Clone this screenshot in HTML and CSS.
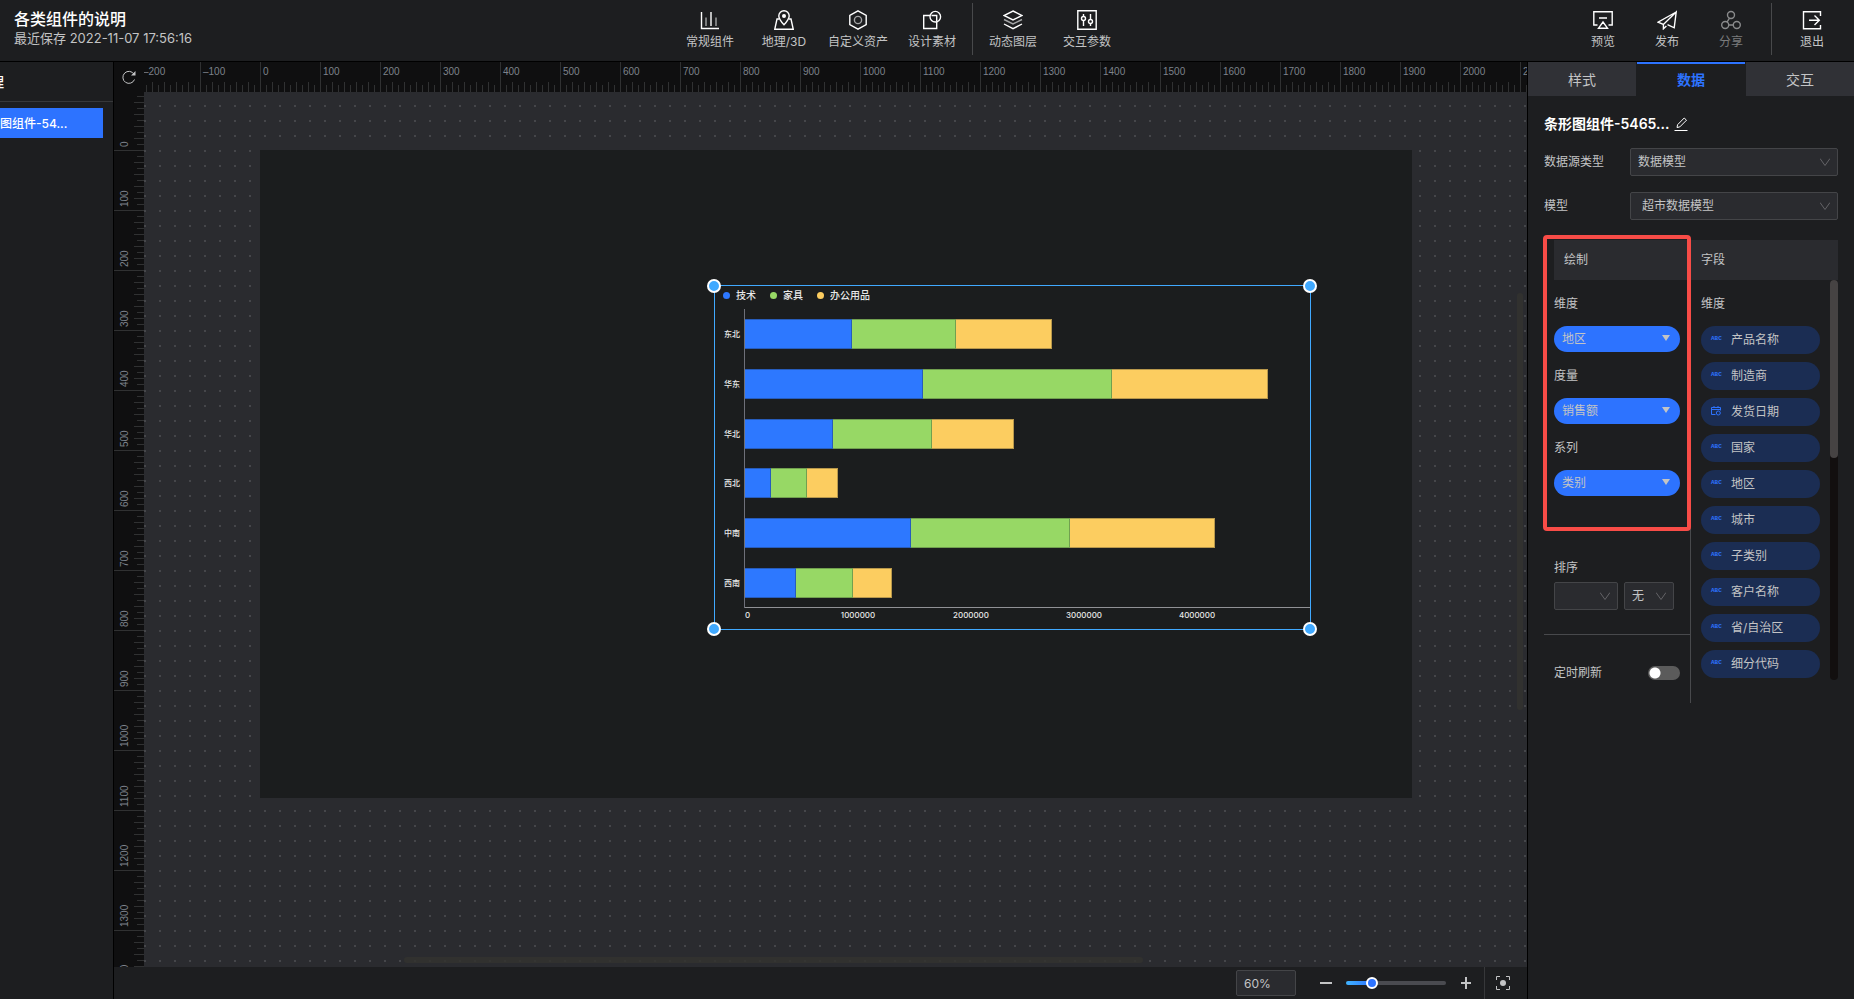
FILE: index.html
```html
<!DOCTYPE html>
<html lang="zh-CN">
<head>
    <meta charset="UTF-8">
    <meta name="viewport" content="width=device-width, initial-scale=1.0">
    <title>各类组件的说明</title>
    <link rel="stylesheet" href="styles.css">
</head>
<body>
    <header class="topbar">
        <div class="project">
            <h1>各类组件的说明</h1>
            <p>最近保存 2022-11-07 17:56:16</p>
        </div>
        <nav class="tools">
            <button class="tool">
                <svg viewBox="0 0 20 20"><path d="M1.5 2v16.5H19M11 2v14"/><path class="dim" d="M6 7.5V16M16 7.5V16"/></svg>
                常规组件
            </button>
            <button class="tool">
                <svg viewBox="0 0 20 20"><path d="M5 9H3L.8 19.2h18.4L17 9h-2"/><path d="M10 14.8C6.5 11 4.8 8.8 4.8 6a5.2 5.2 0 0 1 10.4 0c0 2.8-1.7 5-5.2 8.8z"/><circle class="solid" cx="10" cy="6" r="2"/></svg>
                地理/3D
            </button>
            <button class="tool">
                <svg viewBox="0 0 20 20"><path d="M10 .9l8.2 4.5v9.2L10 19.1l-8.2-4.5V5.4z"/><circle class="dim" cx="10" cy="10" r="3.6"/></svg>
                自定义资产
            </button>
            <button class="tool">
                <svg viewBox="0 0 20 20"><path d="M8 5.5H1.7v13h13V12"/><circle cx="13.3" cy="6.7" r="5.3"/><path d="M9.5 5.5h5.2V11"/></svg>
                设计素材
            </button>
            <span class="divider"></span>
            <button class="tool">
                <svg viewBox="0 0 20 20"><path d="M10 1l9 4.5-9 4.5-9-4.5z"/><path class="dim" d="M1 9.5l9 4.5 9-4.5"/><path d="M1 14l9 4.7 9-4.7"/></svg>
                动态图层
            </button>
            <button class="tool">
                <svg viewBox="0 0 20 20"><path d="M.8.8h18.4v18.4H.8z"/><path d="M6.5 4v2.5M6.5 10.5V16M13.5 4v5.5M13.5 13.5V16"/><circle cx="6.5" cy="8.5" r="2"/><circle cx="13.5" cy="11.5" r="2"/></svg>
                交互参数
            </button>
        </nav>
        <div class="actions">
            <button class="tool">
                <svg viewBox="0 0 20 20"><path d="M4.5 15H.8V1.8h18.4V15h-3.7M6 8h8M10 12l4.5 6.2h-9z"/></svg>
                预览
            </button>
            <button class="tool">
                <svg viewBox="0 0 20 20"><path d="M19.2 2L1 12.2l5.4 2.3L19.2 2l-2 15.8-6.7-3.2"/><path d="M6.4 14.5v4.3l3-2.8"/></svg>
                发布
            </button>
            <button class="tool" disabled>
                <svg viewBox="0 0 20 20"><circle cx="10" cy="5" r="3.5"/><circle cx="4.2" cy="15" r="3.5"/><circle cx="15.8" cy="15" r="3.5"/><path d="M8.5 8.2l-2.5 4M7.7 15h4.6"/></svg>
                分享
            </button>
            <span class="divider"></span>
            <button class="tool">
                <svg viewBox="0 0 20 20"><path d="M18.5 6V1.7h-17v17h17V15M7 10.2h10M12.5 5.5l4.8 4.7-4.8 4.7"/></svg>
                退出
            </button>
        </div>
    </header>

    <div class="workspace">
        <aside class="layers">
            <h2><span>理</span></h2>
            <a class="layer" href="#">图组件-54...</a>
        </aside>

        <main class="editor">
            <div class="corner">
                <button class="icon-btn" aria-label="重置">
                    <svg viewBox="0 0 14 14"><path d="M12 4.2A6 6 0 1 0 12.5 9.5"/><path class="solid" d="M13.5 1v4.6H9z"/></svg>
                </button>
            </div>
            <div class="ruler ruler-x">
                <span>–200</span><span>–100</span><span>0</span><span>100</span><span>200</span><span>300</span><span>400</span><span>500</span><span>600</span><span>700</span><span>800</span><span>900</span><span>1000</span><span>1100</span><span>1200</span><span>1300</span><span>1400</span><span>1500</span><span>1600</span><span>1700</span><span>1800</span><span>1900</span><span>2000</span><span>2100</span>
            </div>
            <div class="ruler ruler-y">
                <span>0</span><span>100</span><span>200</span><span>300</span><span>400</span><span>500</span><span>600</span><span>700</span><span>800</span><span>900</span><span>1000</span><span>1100</span><span>1200</span><span>1300</span><span>1400</span>
            </div>
            <div class="canvas">
                <div class="stage">
                    <!-- selected component -->
                    <section class="chart">
                        <i class="handle nw"></i><i class="handle ne"></i><i class="handle sw"></i><i class="handle se"></i>
                        <ul class="legend">
                            <li class="tech">技术</li>
                            <li class="furniture">家具</li>
                            <li class="office">办公用品</li>
                        </ul>
                        <div class="plot">
                            <div class="row"><span>东北</span><div class="bar"><i class="tech" style="width:18.9%"></i><i class="furniture" style="width:18.5%"></i><i class="office" style="width:16.9%"></i></div></div>
                            <div class="row"><span>华东</span><div class="bar"><i class="tech" style="width:31.5%"></i><i class="furniture" style="width:33.4%"></i><i class="office" style="width:27.7%"></i></div></div>
                            <div class="row"><span>华北</span><div class="bar"><i class="tech" style="width:15.5%"></i><i class="furniture" style="width:17.6%"></i><i class="office" style="width:14.5%"></i></div></div>
                            <div class="row"><span>西北</span><div class="bar"><i class="tech" style="width:4.6%"></i><i class="furniture" style="width:6.4%"></i><i class="office" style="width:5.4%"></i></div></div>
                            <div class="row"><span>中南</span><div class="bar"><i class="tech" style="width:29.4%"></i><i class="furniture" style="width:28.2%"></i><i class="office" style="width:25.5%"></i></div></div>
                            <div class="row"><span>西南</span><div class="bar"><i class="tech" style="width:9.1%"></i><i class="furniture" style="width:10%"></i><i class="office" style="width:7%"></i></div></div>
                        </div>
                        <div class="axis"><span>0</span><span>1000000</span><span>2000000</span><span>3000000</span><span>4000000</span></div>
                    </section>
                </div>
                <i class="scroll scroll-x"></i>
                <i class="scroll scroll-y"></i>
            </div>
            <footer class="zoombar">
                <input class="zoom-value" type="text" value="60%" aria-label="缩放比例">
                <button class="icon-btn" aria-label="缩小"><svg viewBox="0 0 14 14"><path class="thick" d="M1 7h12"/></svg></button>
                <input class="zoom-range" type="range" min="0" max="100" value="23" aria-label="缩放">
                <button class="icon-btn" aria-label="放大"><svg viewBox="0 0 14 14"><path class="thick" d="M2 7h10M7 1v12"/></svg></button>
                <button class="icon-btn fit" aria-label="适应屏幕"><svg viewBox="0 0 14 14"><path d="M.5 4V.5H4M10 .5h3.500V4M13.500 10v3.500H10M4 13.500H.5V10"/><circle class="solid" cx="7" cy="7" r="3"/></svg></button>
            </footer>
        </main>

        <aside class="panel">
            <div class="tabs">
                <button>样式</button>
                <button class="active">数据</button>
                <button>交互</button>
            </div>
            <div class="panel-body">
                <h3>条形图组件-5465...
                    <button class="icon-btn" aria-label="重命名"><svg viewBox="0 0 14 14"><path d="M.5 13.5h13M3 10.5l.6-2.8L10.2 1l2.3 2.2-6.700 6.700z"/></svg></button>
                </h3>
                <div class="form-row">
                    <label for="source">数据源类型</label>
                    <div class="select"><select id="source"><option>数据模型</option></select><svg viewBox="0 0 10 10"><path d="M0 1.5l5 7 5-7"/></svg></div>
                </div>
                <div class="form-row">
                    <label for="model">模型</label>
                    <div class="select wide-pad"><select id="model"><option>超市数据模型</option></select><svg viewBox="0 0 10 10"><path d="M0 1.5l5 7 5-7"/></svg></div>
                </div>

                <div class="columns">
                    <section class="draw">
                        <div class="draw-box"></div>
                        <h4>绘制</h4>
                        <div class="draw-fields">
                            <label for="dim">维度</label>
                            <div class="pill"><select id="dim"><option>地区</option></select></div>
                            <label for="measure">度量</label>
                            <div class="pill"><select id="measure"><option>销售额</option></select></div>
                            <label for="series">系列</label>
                            <div class="pill"><select id="series"><option>类别</option></select></div>
                        </div>
                        <div class="sort">
                            <label for="sort-field">排序</label>
                            <div class="sort-selects">
                                <div class="select sort-field"><select id="sort-field"><option></option></select><svg viewBox="0 0 10 10"><path d="M0 1.5l5 7 5-7"/></svg></div>
                                <div class="select sort-order"><select aria-label="排序方式"><option>无</option></select><svg viewBox="0 0 10 10"><path d="M0 1.5l5 7 5-7"/></svg></div>
                            </div>
                        </div>
                        <div class="refresh">
                            <label for="refresh">定时刷新</label>
                            <input id="refresh" class="switch" type="checkbox">
                        </div>
                    </section>
                    <section class="fields">
                        <h4>字段</h4>
                        <div class="fields-scroll">
                            <div class="fields-list">
                                <h5>维度</h5>
                                <ul>
                                    <li><b>ABC</b>产品名称</li>
                                    <li><b>ABC</b>制造商</li>
                                    <li><svg viewBox="0 0 10 10"><path d="M4.5 8.500H.5v-7h9v3M.5 3.5h9M3 0v2M7 0v2"/><circle cx="7.3" cy="7" r="2"/></svg>发货日期</li>
                                    <li><b>ABC</b>国家</li>
                                    <li><b>ABC</b>地区</li>
                                    <li><b>ABC</b>城市</li>
                                    <li><b>ABC</b>子类别</li>
                                    <li><b>ABC</b>客户名称</li>
                                    <li><b>ABC</b>省/自治区</li>
                                    <li><b>ABC</b>细分代码</li>
                                </ul>
                            </div>
                            <div class="track"><i></i></div>
                        </div>
                    </section>
                </div>
            </div>
        </aside>
    </div>
</body>
</html>
```

FILE: styles.css
```css
* { box-sizing: border-box; }
body {
    margin: 0;
    height: 100vh;
    display: flex;
    flex-direction: column;
    overflow: hidden;
    background: #1d1e20;
    color: #c3c4c5;
    font: 12px/16px Inter, "Noto Sans CJK SC", sans-serif;
}
h1, h2, h3, h4, h5, p, ul { margin: 0; padding: 0; }
ul { list-style: none; }
button, input, select { font: inherit; color: inherit; }
button { padding: 0; border: 0; background: none; }
svg { display: block; fill: none; stroke: currentColor; }
svg .solid { fill: currentColor; stroke: none; }

/* top bar */
.topbar {
    flex: none;
    display: flex;
    height: 62px;
    border-bottom: 1px solid #000;
}
.project { flex: 1; padding: 9px 0 0 14px; }
.project h1 { color: #fff; font-size: 16px; line-height: 20px; font-weight: 500; }
.project p { font-size: 13px; line-height: 18px; }
.tools, .actions { display: flex; align-items: flex-start; }
.tools { margin-right: 61px; }
.actions { flex: 1; justify-content: flex-end; padding-right: 10px; }
.tool {
    display: flex;
    flex-direction: column;
    align-items: center;
    gap: 4px;
    width: 74px;
    padding-top: 10px;
    white-space: nowrap;
}
.actions .tool { width: 64px; }
.tool svg { width: 20px; height: 20px; stroke: #fff; stroke-width: 1.4; }
.tool svg .solid { fill: #fff; stroke: none; }
.tool svg .dim { stroke: #a4a5a6; }
.tool:disabled { color: #7b7c7d; }
.tool:disabled svg { stroke: #8a8b8c; }
.divider { width: 1px; height: 52px; margin: 3px 3px 0; background: #48494b; }
.actions .divider { margin: 3px 8px 0; }

.workspace { flex: 1; display: flex; min-height: 0; }

/* layer list */
.layers {
    flex: none;
    width: 114px;
    overflow: hidden;
    border-right: 1px solid #000;
}
.layers h2 {
    height: 40px;
    border-bottom: 1px solid #37383a;
    color: #fff;
    font-size: 14px;
    line-height: 40px;
    font-weight: 500;
}
.layers h2 span { margin-left: -10px; }
.layer {
    display: block;
    height: 30px;
    margin: 6px 10px 0 0;
    padding-top: 1px;
    background: #2d73ff;
    color: #fff;
    font-weight: 500;
    line-height: 30px;
    text-decoration: none;
}

/* editor */
.editor {
    flex: 1;
    display: grid;
    grid-template: 30px minmax(0, 1fr) 32px / 30px minmax(0, 1fr);
    min-width: 0;
}
.corner { background: #0f0f10; padding: 8px; }
.icon-btn { display: block; width: 14px; height: 14px; }
.ruler {
    display: flex;
    overflow: hidden;
    background-color: #0f0f10;
    color: #7d828b;
    font: 10px/20px "Liberation Sans", sans-serif;
}
.ruler span { flex: none; white-space: nowrap; }
.ruler-x {
    background-image:
        linear-gradient(90deg, #303132 1px, transparent 1px),
        linear-gradient(90deg, #303132 1px, transparent 1px),
        linear-gradient(90deg, #303132 1px, transparent 1px);
    background-size: 60px 30px, 12px 10px, 12px 7px;
    background-position: 56px 0, 8px 100%, 2px 100%;
    background-repeat: repeat-x;
}
.ruler-x span { width: 60px; padding-left: 3px; }
.ruler-x span:first-child { margin-left: -4px; }
.ruler-y {
    flex-direction: column;
    background-image:
        linear-gradient(#303132 1px, transparent 1px),
        linear-gradient(#303132 1px, transparent 1px),
        linear-gradient(#303132 1px, transparent 1px);
    background-size: 30px 60px, 10px 12px, 7px 12px;
    background-position: 0 58px, 100% 10px, 100% 4px;
    background-repeat: repeat-y;
}
.ruler-y span {
    width: 22px;
    height: 60px;
    padding-top: 3px;
    line-height: 22px;
    writing-mode: vertical-rl;
    transform: rotate(180deg);
}
.ruler-y span:first-child { margin-top: -2px; }
/* dot grid, one dot every 15px */
.canvas {
    position: relative;
    overflow: hidden;
    background:
        linear-gradient(#2a2b2f 13px, transparent 13px) 0 0 / 15px 15px,
        linear-gradient(90deg, #2a2b2f 13px, #45464a 13px) 2px 0 / 15px 15px;
}
.stage {
    position: absolute;
    left: 116px;
    top: 58px;
    width: 1152px;
    height: 648px;
    background: #1b1d1e;
}
.scroll { position: absolute; border-radius: 3px; background: rgba(50, 50, 47, .85); }
.scroll-x { left: 260px; right: 384px; bottom: 4px; height: 6px; }
.scroll-y { top: 201px; bottom: 257px; right: 4px; width: 6px; }

/* bar chart */
.chart {
    position: absolute;
    left: 454px;
    top: 135px;
    width: 597px;
    height: 345px;
    border: 1px solid #40a9ff;
    color: #e8e8e8;
}
.handle {
    position: absolute;
    width: 14px;
    height: 14px;
    border: 2px solid #fff;
    border-radius: 50%;
    background: #40a9ff;
}
.nw, .ne { top: -7px; }
.sw, .se { bottom: -7px; }
.nw, .sw { left: -8px; }
.ne, .se { right: -7px; }
.tech { --c: #2d78ff; }
.furniture { --c: #97d865; }
.office { --c: #fccd60; }
.legend {
    display: flex;
    gap: 14px;
    height: 23px;
    padding: 1px 0 0 8px;
    font-size: 10px;
    font-weight: 500;
}
.legend li { display: flex; gap: 6px; height: 16px; align-items: center; }
.legend li::before {
    content: "";
    width: 7px;
    height: 7px;
    border-radius: 50%;
    background: var(--c);
}
.plot {
    display: grid;
    grid-template-rows: repeat(6, 1fr);
    height: 299px;
    margin-left: 9px;
    background:
        linear-gradient(#6e7079, #6e7079) 20px 0 / 1px 100% no-repeat,
        linear-gradient(#909195, #909195) 20px 100% / 100% 1px no-repeat;
}
.row { display: flex; align-items: center; }
.row span { width: 21px; font-size: 8px; line-height: 12px; font-weight: 500; }
.bar { flex: 1; display: flex; height: 30px; }
.bar i {
    background: var(--c);
    border: 1px solid rgba(27, 29, 30, .3);
    border-width: 1px 1px 1px 0;
}
.axis {
    display: flex;
    margin-left: 30px;
    font-size: 8px;
    line-height: 14px;
    font-weight: 500;
}
.axis span { width: 20%; }
/* tick labels are centred on their value */
.axis span + span { transform: translateX(-50%); text-align: center; }

/* zoom bar */
.zoombar {
    grid-column: 1 / 3;
    display: flex;
    align-items: center;
    justify-content: flex-end;
}
.zoom-value {
    width: 60px;
    height: 26px;
    margin-right: 23px;
    padding: 0 7px;
    border: 1px solid #444548;
    border-radius: 2px;
    background: #2a2b2f;
}
.icon-btn .thick { stroke-width: 2; }
.zoom-range {
    appearance: none;
    width: 100px;
    height: 4px;
    margin: 0 13px;
    border-radius: 2px;
    background: linear-gradient(90deg, #40b4ff, #2d73ff 26%, #4a4b50 26%);
}
.zoom-range::-webkit-slider-thumb {
    appearance: none;
    width: 12px;
    height: 12px;
    border: 2px solid #fff;
    border-radius: 50%;
    background: #2d73ff;
}
.fit {
    width: 43px;
    height: 32px;
    margin-left: 11px;
    padding-left: 11px;
    border-left: 1px solid #37383a;
}
.fit svg { width: 14px; height: 14px; }

/* right panel */
.panel { flex: none; width: 327px; border-left: 1px solid #000; }
.tabs { display: flex; gap: 1px; height: 34px; }
.tabs button {
    flex: 1;
    border-top: 2px solid transparent;
    background: #303136 border-box;
    font-size: 14px;
}
.tabs .active { border-color: #2d73ff; background: none; color: #2d73ff; font-weight: 700; }
.panel-body { padding: 16px; }
.panel h3 {
    display: flex;
    align-items: center;
    gap: 5px;
    height: 24px;
    margin-bottom: 12px;
    color: #fff;
    font-size: 14px;
    font-weight: 600;
}
.form-row {
    display: flex;
    align-items: center;
    justify-content: space-between;
    height: 28px;
    margin-bottom: 16px;
}
.select { position: relative; width: 208px; height: 28px; }
.select select {
    appearance: none;
    display: block;
    width: 100%;
    height: 100%;
    padding: 0 7px;
    border: 1px solid #444548;
    border-radius: 2px;
    background: #2a2b2f;
}
.wide-pad select { padding-left: 11px; }
.select svg {
    position: absolute;
    right: 8px;
    top: 9px;
    width: 10px;
    height: 10px;
    stroke: #636467;
}
.columns { display: flex; padding-top: 4px; }
.panel h4 {
    height: 40px;
    padding-left: 10px;
    background: #2a2b2f;
    font-size: 12px;
    font-weight: 400;
    line-height: 40px;
}
.draw { position: relative; width: 147px; padding-bottom: 22px; border-right: 1px solid #48494c; }
.draw h4 { margin: 0 -1px 0 10px; }
/* highlight drawn over the mapping area */
.draw-box {
    position: absolute;
    left: -1px;
    top: -5px;
    width: 148px;
    height: 296px;
    border: 4px solid #f84c47;
    border-radius: 4px;
    pointer-events: none;
}
.draw-fields { padding: 16px 10px 0; }
.draw-fields label { display: block; margin-bottom: 14px; }
.pill {
    position: relative;
    height: 26px;
    margin-bottom: 16px;
}
.pill select {
    appearance: none;
    width: 100%;
    height: 26px;
    padding: 0 8px;
    border: 0;
    border-radius: 13px;
    background: #2d73ff;
}
.pill::after {
    content: "";
    position: absolute;
    right: 10px;
    top: 9px;
    border: 4px solid transparent;
    border-top: 6px solid #c3c4c5;
    border-bottom: 0;
}
.sort { margin-top: 64px; padding: 0 0 24px 10px; border-bottom: 1px solid #48494c; }
.sort label { display: block; margin-bottom: 6px; }
.sort-selects { display: flex; gap: 6px; }
.sort-field { width: 64px; }
.sort-order { width: 50px; }
.refresh {
    display: flex;
    align-items: center;
    justify-content: space-between;
    margin-top: 30px;
    padding: 0 10px;
}
.switch {
    appearance: none;
    width: 32px;
    height: 14px;
    margin: 0;
    border-radius: 7px;
    background: radial-gradient(circle at 7px 7px, #fff 5px, #5b5b5b 6px);
}
.fields { flex: 1; }
.fields-scroll { display: flex; justify-content: space-between; height: 400px; }
.fields-list { flex: 1; padding: 16px 10px 0; overflow: hidden; }
.fields h5 { margin-bottom: 14px; font-size: 12px; font-weight: 400; }
.fields li {
    display: flex;
    align-items: center;
    height: 28px;
    margin-bottom: 8px;
    padding-left: 10px;
    border-radius: 14px;
    background: #1b2d53;
}
.fields li b {
    width: 20px;
    padding-bottom: 2px;
    color: #2d73ff;
    font: 700 6px/12px "Liberation Mono", monospace;
}
.fields li svg { width: 10px; height: 10px; margin: 0 10px 2px 0; stroke: #2d73ff; }
.track { width: 8px; border-radius: 4px; background: #120f0f; }
.track i { display: block; height: 178px; border-radius: 4px; background: #464343; }
```
